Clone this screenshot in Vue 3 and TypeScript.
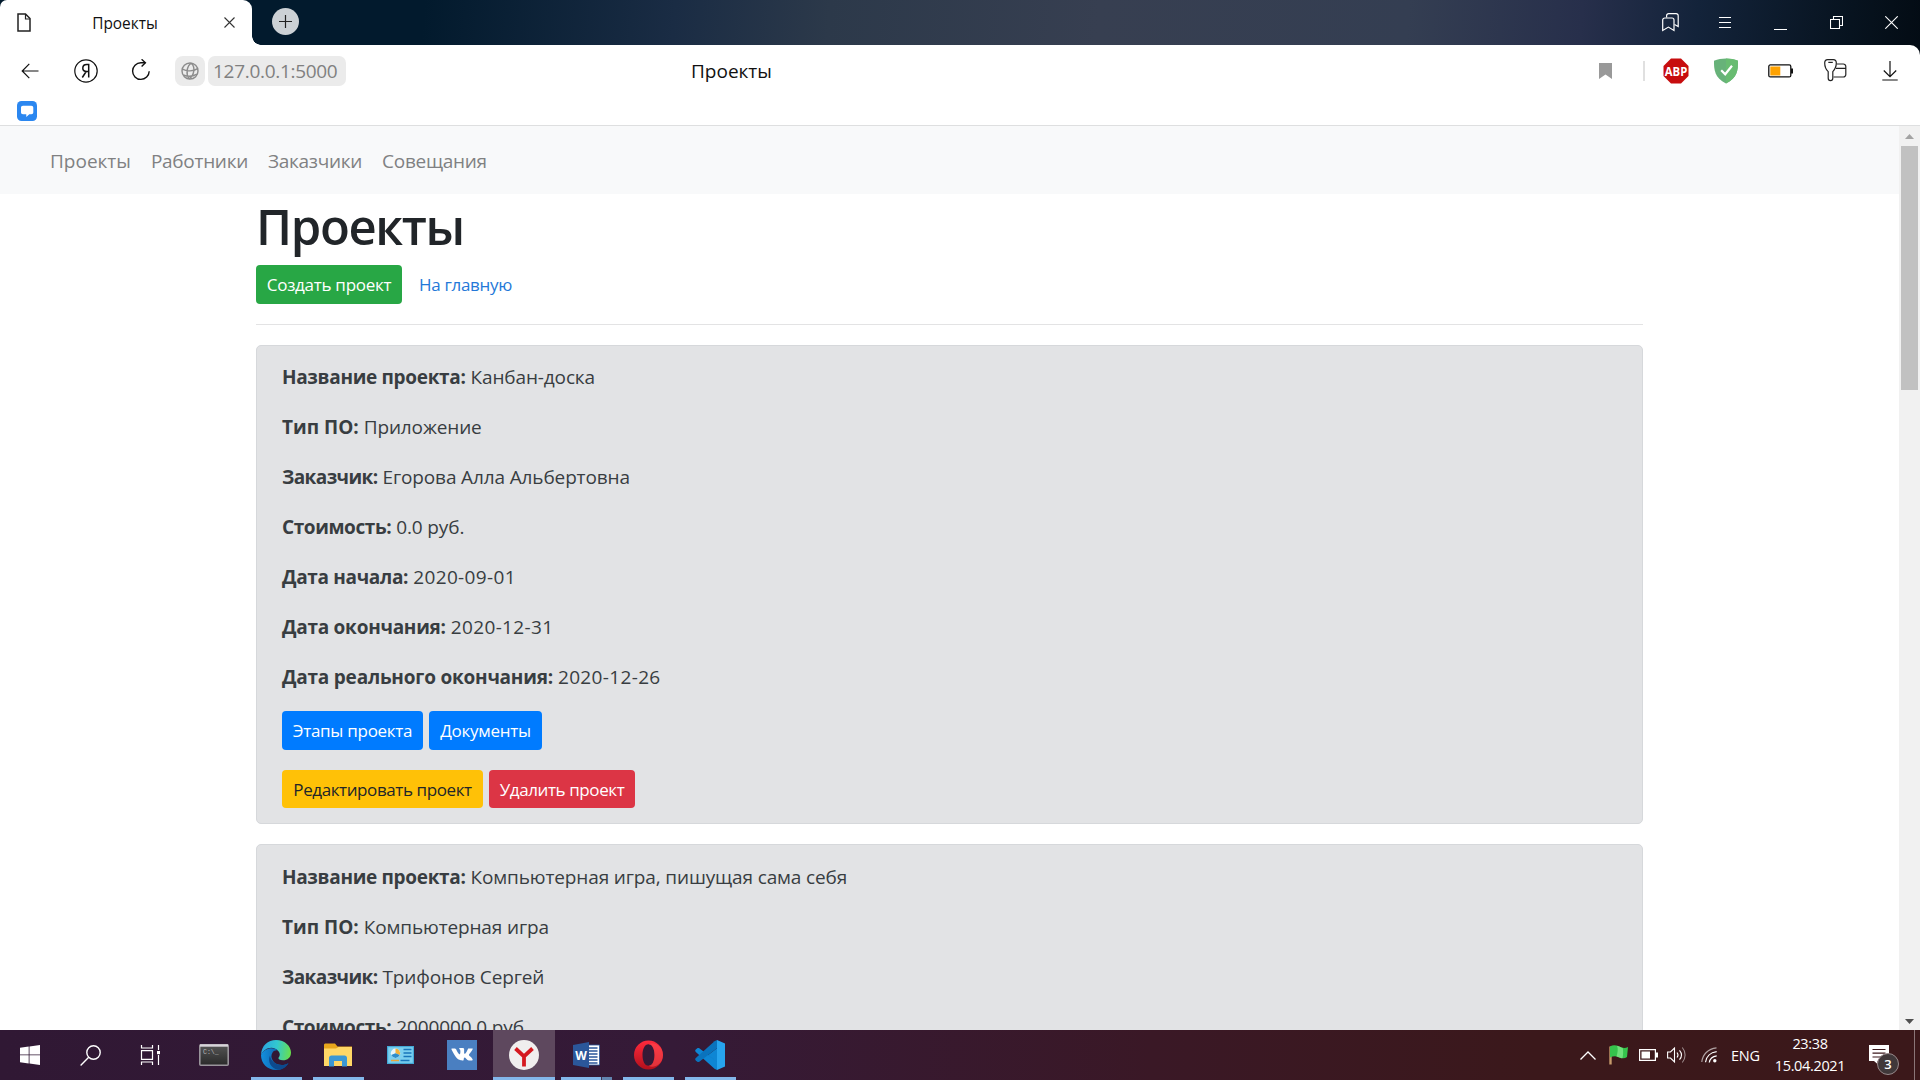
<script setup lang="ts">
interface Field {
  label: string
  value: string
  numeric?: boolean
}

interface Project {
  id: number
  fields: Field[]
  editable: boolean
}

const navLinks: string[] = ['Проекты', 'Работники', 'Заказчики', 'Совещания']

const projects: Project[] = [
  {
    id: 1,
    editable: true,
    fields: [
      { label: 'Название проекта:', value: 'Канбан-доска' },
      { label: 'Тип ПО:', value: 'Приложение' },
      { label: 'Заказчик:', value: 'Егорова Алла Альбертовна' },
      { label: 'Стоимость:', value: '0.0 руб.' },
      { label: 'Дата начала:', value: '2020-09-01', numeric: true },
      { label: 'Дата окончания:', value: '2020-12-31', numeric: true },
      { label: 'Дата реального окончания:', value: '2020-12-26', numeric: true },
    ],
  },
  {
    id: 2,
    editable: false,
    fields: [
      { label: 'Название проекта:', value: 'Компьютерная игра, пишущая сама себя' },
      { label: 'Тип ПО:', value: 'Компьютерная игра' },
      { label: 'Заказчик:', value: 'Трифонов Сергей' },
      { label: 'Стоимость:', value: '2000000.0 руб.' },
    ],
  },
]
</script>

<template>
  <div class="screen">
    <header class="chrome">
      <div class="tabs">
        <div class="tab">
          <svg class="tab-file" width="14" height="19" viewBox="0 0 14 19" fill="none" stroke="#222" stroke-width="1.5">
            <path d="M1 1h7.500l4.500 4.500V18H1z" /><path d="M8.500 1v5H13" stroke-width="1.200" />
          </svg>
          <span class="tab-title">Проекты</span>
          <svg class="tab-close" width="11" height="11" viewBox="0 0 11 11" stroke="#333" stroke-width="1.100">
            <path d="M.5.5l10 10M10.500.5l-10 10" />
          </svg>
        </div>
        <div class="new-tab">
          <svg width="13" height="13" viewBox="0 0 13 13" stroke="#222" stroke-width="1.200"><path d="M6.500 0v13M0 6.500h13" /></svg>
        </div>
        <div class="window-controls">
          <span>
            <svg width="17" height="19" viewBox="0 0 17 19" fill="none" stroke="#fff" stroke-width="1.200">
              <path d="M.7 17.500V7a2 2 0 0 1 2-2h7.300a2 2 0 0 1 2 2v10.500l-5.600-3.400z" />
              <path d="M4.600 4.500V2.700a2 2 0 0 1 2-2h7.600a2 2 0 0 1 2 2v10.800L12.500 11.500" />
            </svg>
          </span>
          <span>
            <svg width="12" height="12" viewBox="0 0 12 12" stroke="#fff"><path d="M0 .5h12M0 5.500h12M0 10.500h12" /></svg>
          </span>
          <span>
            <svg class="minimize" width="13" height="1" viewBox="0 0 13 1" stroke="#fff"><path d="M0 .5h13" /></svg>
          </span>
          <span>
            <svg width="13" height="13" viewBox="0 0 13 13" fill="none" stroke="#fff" stroke-width="1.100">
              <path d="M.5 3.500h9v9h-9z" /><path d="M3.500 3.500v-3h9v9h-3" />
            </svg>
          </span>
          <span>
            <svg width="13" height="13" viewBox="0 0 13 13" stroke="#fff" stroke-width="1.100"><path d="M.3.3l12.400 12.400M12.700.3L.3 12.700" /></svg>
          </span>
        </div>
      </div>

      <div class="toolbar">
        <div class="nav-buttons">
          <svg width="18" height="16" viewBox="0 0 18 16" fill="none" stroke="#111" stroke-width="1.200"><path d="M17.500 8H1.200M8.300.8L1.200 8l7.100 7.200" /></svg>
          <svg width="24" height="24" viewBox="0 0 24 24" fill="none" stroke="#111" stroke-width="1.200">
            <circle cx="12" cy="12" r="11.200" />
            <path d="M14.700 18.500V5.600h-2c-2.500 0-3.900 1.600-3.900 3.700 0 2.200 1.300 3.200 3.900 3.200h2M12.200 12.500L8.300 18.500" stroke-width="1.500" />
          </svg>
          <svg width="20" height="22" viewBox="0 0 20 22" fill="none" stroke="#111" stroke-width="1.400">
            <path d="M18.200 12.300a8.300 8.300 0 1 1-8.300-8.500h4.300" /><path d="M10.600.3l3.800 3.500-3.800 3.700" />
          </svg>
        </div>
        <div class="globe">
          <svg width="18" height="18" viewBox="0 0 18 18" fill="none" stroke="#8c8c8c" stroke-width="1.400">
            <circle cx="9" cy="9" r="8" />
            <path d="M10.500 1.200C5.500 4 4.800 12.500 8 16.900M10.500 1.200c4 4.300 2.800 12-2.500 15.700M1.300 7.200c4.500 2.300 11 2.300 15.300-.6M2.300 12.800c4 2 9.400 1.700 13.700-.6" />
          </svg>
        </div>
        <div class="url">127.0.0.1:5000</div>
        <div class="page-title">Проекты</div>
        <div class="extensions">
          <svg class="bookmark" width="13" height="16" viewBox="0 0 13 16"><path d="M0 0h13v16l-6.500-4.600L0 16z" fill="#999" /></svg>
          <i class="divider"></i>
          <svg class="abp" width="26" height="26" viewBox="0 0 26 26">
            <path d="M8 .5h10L25.500 8v10L18 25.500H8L.5 18V8z" fill="#c70d0e" />
            <text x="13" y="17.500" text-anchor="middle" textLength="22.500" lengthAdjust="spacingAndGlyphs" font-family="Open Sans, sans-serif" font-weight="700" font-size="13" fill="#fff">ABP</text>
          </svg>
          <svg class="shield" width="24" height="26" viewBox="0 0 24 26">
            <path d="M12 .5c4 0 8.300.8 12 2.300 0 9.500-.5 16.700-12 22.700C.5 19.500 0 12.300 0 2.800 3.700 1.300 8 .5 12 .5z" fill="#67b279" />
            <path d="M12 25.500c11.500-6 12-13.200 12-22.700C20.300 1.300 16 .5 12 .5z" fill="#68bc71" />
            <path d="M7.200 12.300l4 4L18 7.800" fill="none" stroke="#fff" stroke-width="2.200" />
          </svg>
          <svg class="battery" width="26" height="14" viewBox="0 0 26 14">
            <rect x=".8" y=".9" width="22" height="12" rx="1.500" fill="#fff" stroke="#111" stroke-width="1.300" />
            <path d="M23 4.500h2v5h-2z" fill="#111" /><path d="M2.300 2.500h10v9h-10z" fill="#ffa200" />
          </svg>
          <svg class="key" width="23" height="23" viewBox="0 0 23 23" fill="none" stroke="#222" stroke-width="1.200">
            <path d="M12.700 5h6.600a2.500 2.500 0 0 1 2.500 2.500v8a2.500 2.500 0 0 1-2.500 2.500H9.500M12 9.300h9.800" />
            <path d="M4.200 12.700C1.500 10 .7 7 .7 4c0-2.200 1.200-3.300 3-3.300h5.600c1.800 0 3 1.100 3 3.300 0 3-1 6-3.500 8.700v6.600c0 1.600-.8 2.400-2.300 2.400s-2.300-.8-2.300-2.400z" />
            <path d="M4.300 3.400h4.500" />
          </svg>
          <svg width="16" height="20" viewBox="0 0 16 20" fill="none" stroke="#111" stroke-width="1.200"><path d="M8 0v15.500M1.800 9.500L8 15.700l6.200-6.200M.3 19h15.400" /></svg>
        </div>
      </div>

      <div class="bookmarks">
        <svg width="20" height="20" viewBox="0 0 20 20">
          <rect width="20" height="20" rx="4.500" fill="#2b87f0" />
          <path d="M6 4.800h8.300c1.300 0 2 .7 2 2v4.400c0 1.300-.7 2-2 2h-2L9.300 16v-2.800H6c-1.300 0-2-.7-2-2V6.800c0-1.300.7-2 2-2z" fill="#fff" />
        </svg>
      </div>
    </header>

    <div class="viewport">
      <main class="page">
        <nav class="navbar">
          <a v-for="link in navLinks" :key="link">{{ link }}</a>
        </nav>
        <div class="container">
          <h1>Проекты</h1>
          <div class="actions">
            <a class="btn success">Создать проект</a>
            <a class="btn link">На главную</a>
          </div>
          <hr />
          <section v-for="project in projects" :key="project.id" class="card">
            <p v-for="field in project.fields" :key="field.label">
              <b>{{ field.label }}</b><span :class="{ numeric: field.numeric }">{{ field.value }}</span>
            </p>
            <template v-if="project.editable">
              <div class="btn-row">
                <a class="btn primary">Этапы проекта</a>
                <a class="btn primary docs">Документы</a>
              </div>
              <div class="btn-row">
                <a class="btn warning">Редактировать проект</a>
                <a class="btn danger">Удалить проект</a>
              </div>
            </template>
          </section>
        </div>
      </main>
      <div class="scrollbar">
        <svg width="9" height="5" viewBox="0 0 9 5"><path d="M0 5L4.500 0 9 5z" fill="#a3a3a3" /></svg>
        <div class="thumb"></div>
        <svg class="down" width="9" height="5" viewBox="0 0 9 5"><path d="M0 0l4.500 5L9 0z" fill="#505050" /></svg>
      </div>
    </div>

    <footer class="taskbar">
      <div class="sys">
        <svg width="20" height="20" viewBox="0 0 20 20" fill="#fff"><path d="M0 2.800L8.700 1.500v8H0zM9.500 1.400L20 0v9.500H9.500zM0 10.300h8.700v8.200L0 17.300zM9.500 10.300H20V20L9.500 18.600z" /></svg>
      </div>
      <div class="sys">
        <svg width="21" height="21" viewBox="0 0 21 21" fill="none" stroke="#fff" stroke-width="1.400"><circle cx="13.500" cy="7.500" r="6.700" /><path d="M8.700 12.300L.6 20.400" /></svg>
      </div>
      <div class="sys">
        <svg width="21" height="20" viewBox="0 0 21 20" fill="none" stroke="#fff" stroke-width="1.200">
          <path d="M1.500 5.700h11v8.600h-11zM1.500 0v3h11V0M1.500 20v-3h11v3M18.500 0v5M18.500 10v10" /><path d="M17 6h3v3.200h-3z" fill="#fff" stroke="none" />
        </svg>
      </div>

      <div class="apps">
        <div class="app">
          <svg width="30" height="22" viewBox="0 0 30 22">
            <defs><linearGradient id="cmd" x2="0" y2="1"><stop stop-color="#555" /><stop offset="1" stop-color="#2a2a2a" /></linearGradient></defs>
            <rect x=".8" y=".8" width="28.400" height="20.400" rx="1" fill="url(#cmd)" stroke="#99949b" stroke-width="1.600" />
            <path d="M1 1.500h28" stroke="#d8d4da" stroke-width="2.400" />
            <text x="4" y="10" font-family="Liberation Mono, monospace" font-size="6.500" fill="#b8b8b8">C:\_</text>
          </svg>
        </div>
        <div class="app running">
          <svg width="30" height="30" viewBox="0 0 30 30">
            <defs>
              <linearGradient id="edgeTop" x1="0" y1=".5" x2="1" y2=".6"><stop stop-color="#2aa5e0" /><stop offset=".5" stop-color="#32c8d0" /><stop offset="1" stop-color="#69e04a" /></linearGradient>
              <linearGradient id="edgeLow" x1="0" x2="1"><stop stop-color="#1390de" /><stop offset="1" stop-color="#0b4d95" /></linearGradient>
            </defs>
            <path d="M0 15C.4 5.500 7 0 15 0c9 0 15 6.400 15 12.500 0 5.200-3.600 7.800-8 7.800-3.200 0-5-1.300-4.500-2.500 1.700-2 1.700-4.500.2-6.400C12.500 5 3.300 7.500 0 15z" fill="url(#edgeTop)" />
            <path d="M0 15C2.800 8.500 12.500 6.200 17 10.700c-1.500-.8-4-.1-5.300 1.600-3.500 4.700.3 12.700 9 12.700 2.400 0 4.800-.8 6.800-2.100C24.500 27.500 20 30 15 30 6.500 30 0 23.500 0 15z" fill="url(#edgeLow)" />
            <path d="M9 15.500c-2.700 6 1 13 8 14.300 5-.4 8.700-3.200 10.500-6.900-2 1.300-4.400 2.100-6.800 2.100-6.500 0-11-4.300-11.700-9.500z" fill="#0c4a8e" />
          </svg>
        </div>
        <div class="app running">
          <svg width="28" height="24" viewBox="0 0 28 24">
            <path d="M0 2C0 1 .7.5 1.500.5H11l2.500 3H28V23H0z" fill="#e8a61c" />
            <path d="M0 5.500h12L14.500 4H28v19H0z" fill="#ffd766" />
            <path d="M5 23V15c0-1.500 1-2.500 2.500-2.500h13c1.500 0 2.500 1 2.500 2.500v8.500h-5V18H10v5.500H5z" fill="#3b97d3" />
          </svg>
        </div>
        <div class="app">
          <svg width="27" height="18" viewBox="0 0 27 18">
            <rect x=".6" y=".6" width="25.800" height="16.800" fill="#7cd0f0" stroke="#43a8d6" stroke-width="1.200" />
            <circle cx="8.500" cy="7.300" r="4.700" fill="#e8f5fa" /><path d="M8.500 7.300V2.600a4.700 4.700 0 0 1 4.300 6.500z" fill="#f2b23a" /><path d="M8.500 7.300l4.300 1.800a4.700 4.700 0 0 1-8.600 0z" fill="#2e8ecb" />
            <path d="M16.500 3.500h8M16.500 7h8M16.500 10.500h8M13.500 14.500h9" stroke="#1976ba" stroke-width="1.500" /><path d="M4 14.500h8" stroke="#e7a73c" stroke-width="1.500" />
          </svg>
        </div>
        <div class="app">
          <svg width="30" height="30" viewBox="0 0 30 30">
            <rect width="30" height="30" fill="#4a7fc1" />
            <path d="M14.400 21h1.500s.5 0 .7-.3c.2-.2.200-.7.200-.7s0-2.100 1-2.400c.9-.3 2.200 2 3.500 2.900 1 .7 1.700.5 1.700.5h3.400s1.800-.1.900-1.500c0-.1-.5-1.200-2.700-3.200-2.300-2.100-2-1.800.8-5.400 1.700-2.200 2.300-3.600 2.100-4.100h-4.800s-.3 0-.5.100c-.2.100-.4.500-.4.500s-.6 1.600-1.400 2.900c-1.700 2.800-2.300 3-2.600 2.800-.6-.4-.5-1.600-.5-2.500 0-2.700.4-3.800-.8-4.100-.4-.1-.7-.2-1.700-.2-1.300 0-2.400 0-3 .3-.4.200-.8.700-.6.700.3 0 .9.200 1.200.6.400.6.400 1.900.4 1.900s.2 3.500-.6 3.900c-.5.300-1.300-.3-3-3-.8-1.400-1.400-2.900-1.400-2.900s-.4-1-1.500-1H2.800c-.6 0-.8.5-.6 1 0 0 3.100 7.100 6.600 10.700 2.400 2.500 5.600 2.500 5.600 2.500z" fill="#fff" transform="translate(2.600 2.800) scale(.84)" />
          </svg>
        </div>
        <div class="app running active">
          <svg width="30" height="30" viewBox="0 0 30 30">
            <circle cx="15" cy="15" r="15" fill="#f0eeee" />
            <path d="M6.500 8.500L15 16.500l8.500-8M15 16v10.500" fill="none" stroke="#d51920" stroke-width="3.800" />
          </svg>
        </div>
        <div class="app running grouped">
          <svg width="27" height="26" viewBox="0 0 27 26">
            <path d="M15 3h11.500v20H15z" fill="#fff" stroke="#2b579a" stroke-width=".8" />
            <path d="M16 6h8.500M16 9h8.500M16 12h8.500M16 15h8.500M16 18h8.500M16 21h8.500" stroke="#2b579a" stroke-width="1.400" />
            <path d="M0 3L16 0v26L0 23z" fill="#2b579a" />
            <text x="8" y="17.500" text-anchor="middle" font-family="Open Sans, sans-serif" font-weight="700" font-size="12" fill="#fff">W</text>
          </svg>
        </div>
        <div class="app running">
          <svg width="29" height="30" viewBox="0 0 29 30">
            <defs><linearGradient id="opera" x2="0" y2="1"><stop stop-color="#ff2a3c" /><stop offset="1" stop-color="#b3101c" /></linearGradient></defs>
            <path fill-rule="evenodd" d="M14.500.5a14.500 14.500 0 1 1 0 29 14.500 14.500 0 1 1 0-29zm0 3.700c-3.800 0-6 4.800-6 10.800s2.200 10.800 6 10.800 6-4.800 6-10.800-2.200-10.800-6-10.800z" fill="url(#opera)" />
            <path d="M14.500 4.200c5-3.200 14.500 1.500 14.500 10.800s-9.500 14-14.500 10.800c3.800 0 6-4.800 6-10.800s-2.200-10.800-6-10.800z" fill="#ff4d52" opacity=".55" />
          </svg>
        </div>
        <div class="app running">
          <svg width="30" height="30" viewBox="0 0 30 30">
            <path d="M22 8.300L13.200 15l8.800 6.700V30l-2.500-1.300L.8 11.900c-.8-.8-.8-1.600 0-2.300l1.500-1.300c.6-.5 1.300-.4 2 0L22 21.700z" fill="#0e86d4" />
            <path d="M22 0v8.300L4.300 21.700c-.7.400-1.400.5-2 0L.8 20.400c-.8-.7-.8-1.500 0-2.300L19.500 1.300z" fill="#0a73bd" />
            <path d="M22 0l8 3.500v23L22 30z" fill="#27a4ee" />
          </svg>
        </div>
      </div>

      <div class="tray">
        <svg width="16" height="9" viewBox="0 0 16 9" fill="none" stroke="#fff" stroke-width="1.300"><path d="M.5 8.500L8 1l7.500 7.500" /></svg>
        <svg class="flag" width="20" height="20" viewBox="0 0 20 20">
          <path d="M1.500 1.500v18" stroke="#c69a6b" stroke-width="2.400" />
          <path d="M1 1.500c3-2 6-1.500 9 0s6 2 9 .5l-1 10c-3 2-6 1-8.500 0S4 11 1 12.500z" fill="#35c44c" /><path d="M8 .8c1.200 2.500.8 7-.5 10.600 3.500.9 4 1.700 6 1.900.8-3.400.8-7 .3-10.300C11.500 2.800 10.500 1 8 .8z" fill="#6fe07a" />
        </svg>
        <svg class="power" width="19" height="12" viewBox="0 0 19 12"><path d="M.6.6h15.800v10.800H.6z" fill="none" stroke="#fff" stroke-width="1.200" /><path d="M2.500 2.500H11v7H2.500zM17 3.500h2v5h-2z" fill="#fff" /></svg>
        <svg class="volume" width="20" height="18" viewBox="0 0 20 18" fill="none" stroke="#fff" stroke-width="1.100">
          <path d="M.6 6h2.900L7.500 2v14l-4-4H.6z" /><path d="M10 6.500c1.200 1.500 1.200 3.500 0 5M12.500 4.300c2.400 2.800 2.400 6.600 0 9.400" /><path d="M15.300 1.500c3.700 4.300 3.700 10.700 0 15" opacity=".5" />
        </svg>
        <svg class="wifi" width="17" height="16" viewBox="0 0 17 16" fill="none" stroke="#fff" stroke-width="1.200">
          <path d="M.8 15C1.500 7.500 7 1.800 15.500.8" opacity=".6" /><path d="M4.500 15.300C5 9.500 9.500 5.500 15.700 4.700M8.300 15.500c.5-3.500 3.300-6.200 7.400-6.700" /><circle cx="13.800" cy="13.800" r="1.700" fill="#fff" stroke="none" />
        </svg>
        <span class="lang">ENG</span>
        <div class="clock"><span class="time">23:38</span><span class="date">15.04.2021</span></div>
        <div class="notifications">
          <svg width="20" height="19" viewBox="0 0 20 19"><path d="M0 0h20v16H8.500v3L5 16H0z" fill="#fff" /><path d="M3.500 4.500h13M3.500 8.200h13M3.500 12h9" stroke="#3b181c" stroke-width="1.200" /></svg>
          <b>3</b>
        </div>
        <i class="show-desktop"></i>
      </div>
    </footer>
  </div>
</template>

<style>
body {
  margin: 0;
  overflow: hidden;
}
</style>

<style scoped>
.screen {
  display: flex;
  flex-direction: column;
  width: 1920px;
  height: 1080px;
  overflow: hidden;
  background: #fff;
  font-family: 'Open Sans', 'Noto Sans', sans-serif;
}
svg {
  display: block;
  flex: none;
}
.chrome {
  box-sizing: border-box;
  flex: none;
  height: 126px;
  border-bottom: 1px solid #dedfe0;
  background: linear-gradient(95deg, #021a2d 0%, #021a2d 22%, #1a2c44 35%, #2c394a 43%, #373f51 57%, #343e52 73%, #272f4b 82%, #13233a 88%, #07131f 96%, #030b13 100%);
}
.tabs {
  display: flex;
  align-items: center;
  height: 45px;
}
.tab {
  position: relative;
  display: flex;
  align-items: center;
  box-sizing: border-box;
  width: 252px;
  height: 45px;
  padding: 0 17px;
  border-radius: 7px 9px 0 0;
  background: #fff;
}
.tab::after {
  content: '';
  position: absolute;
  left: 252px;
  bottom: 0;
  width: 9px;
  height: 9px;
  background: radial-gradient(circle at 100% 0, transparent 8.500px, #fff 9px);
}
.tab-title {
  flex: 1;
  padding: 1px 5px 0 0;
  font-size: 15.400px;
  color: #111;
  text-align: center;
}
.new-tab {
  display: flex;
  align-items: center;
  justify-content: center;
  width: 27px;
  height: 27px;
  margin: 0 0 2px 20px;
  border-radius: 50%;
  background: #ccd1d5;
}
.window-controls {
  display: flex;
  margin-left: auto;
  padding-right: 1px;
}
.window-controls span {
  display: flex;
  align-items: center;
  justify-content: center;
  width: 55.300px;
  height: 45px;
}
.minimize {
  margin-top: 13px;
}
.toolbar {
  display: flex;
  align-items: center;
  box-sizing: border-box;
  height: 51px;
  padding: 0 22px 0 20px;
  border-radius: 0 10px 0 0;
  background: #fff;
}
.nav-buttons {
  display: flex;
  align-items: center;
  gap: 34px;
  width: 155px;
}
.nav-buttons svg:first-child {
  margin: 0 1px 0 0.500px;
}
.nav-buttons svg:last-child {
  margin: -2px 0 0 -0.500px;
}
.globe {
  display: flex;
  align-items: center;
  justify-content: center;
  width: 30px;
  height: 30px;
  margin-right: 3px;
  border-radius: 8px;
  background: #ebebeb;
}
.url {
  box-sizing: border-box;
  width: 138px;
  height: 30px;
  padding-left: 5px;
  border-radius: 7px;
  background: #ebebeb;
  font-size: 19px;
  letter-spacing: -0.300px;
  line-height: 30px;
  color: #808080;
}
.page-title {
  margin-left: 345px;
  font-size: 19px;
  color: #111;
}
.extensions {
  display: flex;
  align-items: center;
  margin-left: auto;
}
.bookmark {
  margin-right: 31px;
}
.divider {
  width: 2px;
  height: 20px;
  margin-right: 18px;
  background: #e0e0e0;
}
.shield {
  margin: 0 30px 0 25px;
}
.key {
  margin: 0 35px 0 30px;
}
.bookmarks {
  height: 24px;
  padding: 5px 0 0 17px;
  background: #fff;
}
.viewport {
  display: flex;
  height: 904px;
  overflow: hidden;
}
.page {
  flex: 1;
  overflow: hidden;
}
.navbar {
  display: flex;
  gap: 20px;
  box-sizing: border-box;
  height: 68px;
  padding: 20px 50px;
  background: #f8f9fa;
  font-size: 19px;
  letter-spacing: -0.290px;
  line-height: 30px;
  color: #808182;
}
.navbar a:first-child {
  letter-spacing: 0;
}
.container {
  width: 1387px;
  margin: 0 auto;
  font-size: 19px;
  line-height: 30px;
}
h1 {
  margin: 0;
  height: 71px;
  font-size: 49px;
  font-weight: 600;
  letter-spacing: -1.350px;
  line-height: 65px;
  color: #212529;
}
.actions,
.btn-row {
  display: flex;
  gap: 6px;
}
.btn {
  display: flex;
  justify-content: center;
  box-sizing: border-box;
  height: 38.750px;
  padding-top: 7px;
  border-radius: 4px;
  font-size: 17px;
  letter-spacing: -0.280px;
  line-height: 26px;
  color: #fff;
  white-space: nowrap;
}
.success {
  width: 146px;
  background: #28a745;
}
.link {
  width: 115px;
  color: #2478d8;
}
hr {
  margin: 20px 0;
  border: 0;
  border-top: 1px solid #e3e3e4;
}
.card {
  box-sizing: border-box;
  min-height: 250px;
  margin-bottom: 20px;
  padding: 16px 25px 14px;
  border: 1px solid #d6d8db;
  border-radius: 5px;
  background: #e2e3e5;
  color: #383d41;
}
.card + .card {
  padding-top: 17px;
}
.card p {
  display: flex;
  gap: 5px;
  margin: 0 0 20px;
  letter-spacing: -0.130px;
  white-space: nowrap;
}
.card b {
  font-weight: 700;
  letter-spacing: -0.320px;
}
.card p:nth-child(2) b {
  letter-spacing: 0;
}
.card p:nth-child(3) b {
  letter-spacing: -0.600px;
}
.card p:nth-child(4) b {
  letter-spacing: -0.400px;
}
.card p:nth-child(6) b {
  letter-spacing: -0.260px;
}
.card p:nth-child(7) b {
  letter-spacing: -0.220px;
}
.card .numeric {
  letter-spacing: 0.350px;
}
.card p + .btn-row {
  margin-top: -1px;
}
.btn-row + .btn-row {
  margin: 20px 0 1px;
}
.primary {
  width: 141px;
  background: #007bff;
}
.docs {
  width: 113px;
}
.warning {
  width: 201px;
  background: #ffc107;
  color: #212529;
  letter-spacing: -0.400px;
}
.danger {
  width: 146px;
  background: #dc3545;
  letter-spacing: -0.400px;
}
.scrollbar {
  display: flex;
  flex-direction: column;
  align-items: center;
  width: 21px;
  padding: 8px 0 6px;
  box-sizing: border-box;
  background: #f1f1f1;
}
.thumb {
  width: 17px;
  height: 244px;
  margin-top: 7px;
  background: #c1c1c1;
}
.down {
  margin-top: auto;
}
.taskbar {
  display: flex;
  height: 50px;
  background: linear-gradient(90deg, #301834 0%, #351a37 35%, #3a1826 60%, #3b181b 80%, #3b181a 100%);
  color: #fff;
}
.sys {
  display: flex;
  align-items: center;
  justify-content: center;
  width: 60px;
}
.apps {
  display: flex;
  margin-left: 3px;
}
.app {
  position: relative;
  display: flex;
  align-items: center;
  justify-content: center;
  width: 62px;
}
.running::after {
  content: '';
  position: absolute;
  right: 5px;
  bottom: 0;
  left: 6px;
  height: 3px;
  background: #83b7ea;
}
.active {
  background: #5e485e;
}
.active::after {
  right: 0;
  left: 0;
}
.grouped::after {
  background: linear-gradient(90deg, #83b7ea 40px, #42304c 40px, #42304c 41px, #6284ae 41px);
}
.tray {
  display: flex;
  align-items: center;
  margin-left: auto;
}
.flag {
  margin-left: 13px;
}
.power {
  margin-left: 10px;
}
.volume {
  margin-left: 9px;
}
.wifi {
  margin-left: 14px;
}
.lang {
  width: 29px;
  margin-left: 13px;
  font-size: 14.500px;
  letter-spacing: -0.200px;
}
.clock {
  display: flex;
  flex-direction: column;
  align-items: center;
  width: 70px;
  margin-left: 15px;
  font-size: 14.500px;
  letter-spacing: -0.350px;
  line-height: 22.500px;
}
.notifications {
  position: relative;
  margin: -1px 0 0 24px;
}
.notifications b {
  position: absolute;
  left: 8px;
  top: 8px;
  box-sizing: border-box;
  width: 22px;
  height: 22px;
  border: 1px solid #97898b;
  border-radius: 50%;
  background: #40383a;
  font-size: 13px;
  font-weight: 600;
  line-height: 20px;
  text-align: center;
}
.show-desktop {
  width: 5px;
  height: 50px;
  margin-left: 25px;
  border-left: 1px solid #8a7577;
}
</style>
